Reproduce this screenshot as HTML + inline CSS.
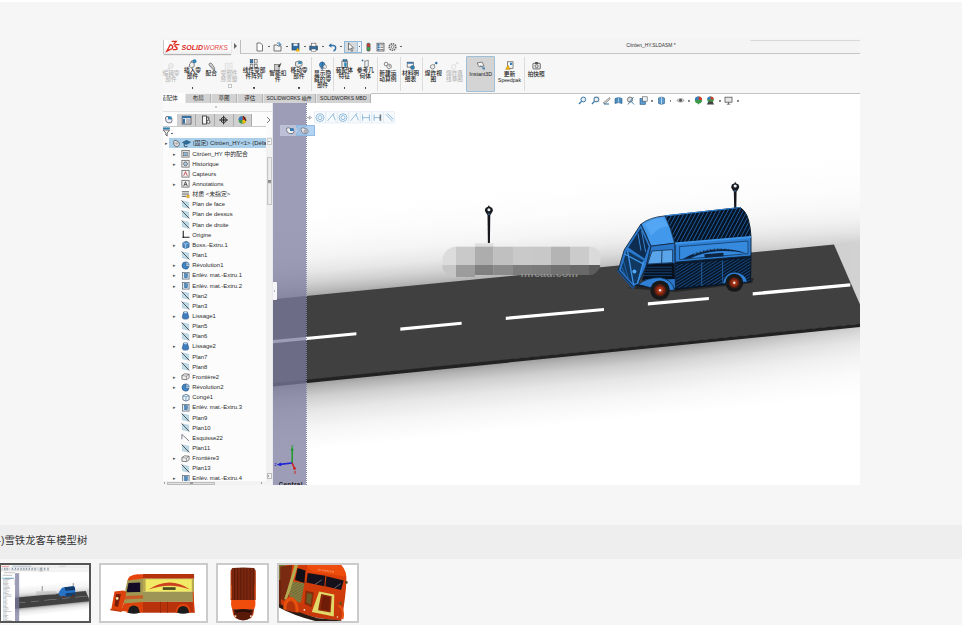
<!DOCTYPE html>
<html lang="zh-CN"><head><meta charset="utf-8"><title>雪铁龙客车模型树</title>
<style>
html,body{margin:0;padding:0}
body{width:962px;height:629px;position:relative;overflow:hidden;background:#f6f6f6;font-family:"Liberation Sans","Noto Sans CJK SC",sans-serif}
div,svg{position:absolute}
.ticon svg,.cico svg{position:static;display:block}
.app{left:163px;top:38px;width:697px;height:447px;background:#f5f5f5;overflow:hidden}
.scene{position:absolute}
.ttext{font-size:5.9px;line-height:10.155px;height:10.155px;color:#2a2a2a;white-space:nowrap;letter-spacing:0px}
.arr{font-size:5px;line-height:10.155px;height:10.155px;color:#555;font-family:"DejaVu Sans",sans-serif}
.ticon{width:9px;height:9px}
.selrow{left:169.4px;width:96.8px;height:10.2px;background:#a9cfea}
.cmd{width:40px;text-align:center;font-size:5.7px;line-height:5.7px;height:5.7px;color:#1a1a1a;white-space:nowrap;font-weight:500}
.cmd.dis{color:#b9b9b9}
.cico{width:11px;height:11px}
.dd{width:1.7px;height:1.4px;background:#444;border-radius:0 0 0.8px 0.8px}
.vsep{top:57px;width:0.7px;height:34px;background:#dcdcdc}
.i3dbox{left:466.4px;top:56.2px;width:28.4px;height:36px;background:#d4d4d4;border:0.8px solid #9ebfd8;box-sizing:border-box;border-radius:1px}
.tab{top:93.6px;height:9.6px;background:#d2d2d2;border-right:0.8px solid #b4b4b4;border-left:0.5px solid #e6e6e6;box-sizing:border-box;font-size:5.5px;line-height:9.8px;text-align:center;color:#222;white-space:nowrap}
.ftab{top:114.4px;height:11.2px;background:#d0d0d0;border-right:0.8px solid #aaa;box-sizing:border-box}
.cap{left:0;top:525px;width:962px;height:33.5px;background:#eeeeee}
.captxt{left:-2.4px;top:533.9px;font-size:10.35px;line-height:13px;color:#333;white-space:nowrap}
.th{top:563px;height:59.8px;box-sizing:border-box;background:#fff;border:2px solid #cbcbcb}
</style></head><body>
<div class="app"></div>

<svg class="scene" viewBox="273 94 587 391" width="587" height="391" style="left:273px;top:94px">
<defs>
<linearGradient id="gUp" gradientUnits="userSpaceOnUse" x1="400" y1="287" x2="391.2" y2="197">
<stop offset="0" stop-color="#a6a6a6"/><stop offset="0.05" stop-color="#b8b8b8"/><stop offset="0.14" stop-color="#d0d0d0"/><stop offset="0.26" stop-color="#e6e6e6"/><stop offset="0.42" stop-color="#f4f4f4"/><stop offset="0.62" stop-color="#fbfbfb"/><stop offset="0.85" stop-color="#fefefe"/><stop offset="1" stop-color="#ffffff"/>
</linearGradient>
<linearGradient id="gFade" gradientUnits="userSpaceOnUse" x1="300" y1="0" x2="860" y2="0">
<stop offset="0" stop-color="#fff" stop-opacity="0"/><stop offset="0.45" stop-color="#fff" stop-opacity="0.18"/><stop offset="1" stop-color="#fff" stop-opacity="0.5"/>
</linearGradient>
<linearGradient id="gDown" gradientUnits="userSpaceOnUse" x1="400" y1="372.5" x2="406.8" y2="440.5">
<stop offset="0" stop-color="#9c9c9c"/><stop offset="0.08" stop-color="#b2b2b2"/><stop offset="0.22" stop-color="#cfcfcf"/><stop offset="0.42" stop-color="#e6e6e6"/><stop offset="0.68" stop-color="#f6f6f6"/><stop offset="1" stop-color="#ffffff"/>
</linearGradient>
<linearGradient id="gFade2" gradientUnits="userSpaceOnUse" x1="640" y1="0" x2="860" y2="0">
<stop offset="0" stop-color="#fff" stop-opacity="0"/><stop offset="1" stop-color="#fff" stop-opacity="0.5"/>
</linearGradient>
<linearGradient id="gBlue" x1="0" y1="0" x2="0" y2="1">
<stop offset="0" stop-color="#4a9ae6"/><stop offset="1" stop-color="#2b74c4"/>
</linearGradient>
<pattern id="ribs" width="2.6" height="2.6" patternUnits="userSpaceOnUse" patternTransform="rotate(-32)">
<rect width="2.6" height="2.6" fill="#07172a"/><rect width="2.6" height="0.6" fill="#1f5ea6"/>
</pattern>
<pattern id="ribsV" width="3.4" height="3.4" patternUnits="userSpaceOnUse" patternTransform="rotate(28)">
<rect width="3.4" height="3.4" fill="#061526"/><rect width="0.8" height="3.4" fill="#2060aa"/>
</pattern>
</defs>
<rect x="273" y="94" width="587" height="391" fill="#ffffff"/>
<!-- upper gradient following the road -->
<polygon points="273,190 860,132 860,306 273,300" fill="url(#gUp)"/>
<polygon points="273,120 860,120 860,306 273,300" fill="url(#gFade)"/>
<!-- lower shadow -->
<polygon points="273,380 860,320 860,412 273,470" fill="url(#gDown)"/>
<polygon points="640,340 860,320 860,412 640,434" fill="url(#gFade2)"/>
<!-- road -->
<polygon points="273,299.2 834,244.5 860,304.6 860,324 273,383.4" fill="#404040"/>
<polygon points="273,383.1 860,323.7 860,327 273,386.4" fill="#222222"/>
<!-- dashes -->
<g fill="#ffffff">
<polygon points="273,340.0 356.4,332.2 356.4,335.2 273,343.2"/>
<polygon points="400.3,327.6 461.6,321.8 461.6,324.8 400.3,330.8"/>
<polygon points="505.8,316.8 604,307.9 604,311 505.8,320"/>
<polygon points="647.9,302.2 708.9,297 708.9,300.1 647.9,305.4"/>
<polygon points="752.7,292.2 850.3,283.2 850.3,286.4 752.7,295.5"/>
</g>
<!-- mosaic watermark -->
<g>
<rect x="475" y="243.4" width="18.6" height="4" fill="#dedede"/>
<path d="M456,246.7 A14,14.6 0 0 0 442.2,261 V265 H456 Z" fill="#dcdcdc"/>
<rect x="456" y="246.7" width="19" height="18.3" fill="#c9c9c9"/>
<rect x="475" y="246.7" width="18.6" height="18.3" fill="#adadad"/>
<rect x="493.6" y="246.7" width="19.4" height="18.3" fill="#c0c0c0"/>
<rect x="513" y="246.7" width="19" height="18.3" fill="#c9c9c9"/>
<rect x="532" y="246.7" width="19" height="18.3" fill="#c8c8c8"/>
<rect x="551" y="246.7" width="19" height="18.3" fill="#b4b4b4"/>
<rect x="570" y="246.7" width="19" height="18.3" fill="#cbcbcb"/>
<path d="M589,246.7 H591 A9.4,11 0 0 1 600.3,257.6 V265 H589 Z" fill="#dadada"/>
<path d="M442.2,265 H456 V277.6 A14,13 0 0 1 442.2,265 Z" fill="#c6c6c6"/>
<rect x="456" y="265" width="19" height="12" fill="#9c9c9c"/>
<rect x="475" y="265" width="18.6" height="10" fill="#808080"/>
<rect x="493.6" y="265" width="19.4" height="10" fill="#8b8b8b"/>
<rect x="513" y="265" width="19" height="10" fill="#7d7d7d"/>
<rect x="532" y="265" width="19" height="10" fill="#7a7a7a"/>
<rect x="551" y="265" width="19" height="10" fill="#717171"/>
<rect x="570" y="265" width="19" height="10" fill="#696969"/>
<path d="M589,265 H600.3 Q600.2,270.6 592.4,275 H589 Z" fill="#5c5c5c"/>
<clipPath id="wmclip"><rect x="510" y="274.2" width="80" height="3"/></clipPath>
<text x="520.6" y="276.5" font-family="Liberation Sans, sans-serif" font-size="10.4" font-weight="bold" fill="#c4c4c4" opacity="0.55" textLength="57.4" lengthAdjust="spacingAndGlyphs" clip-path="url(#wmclip)">mfcad.com</text>
</g>
<!-- lamp 1 -->
<g>
<path d="M487.5,214 H490.3 L489.9,243 H487.9 Z" fill="#15171a"/>
<path d="M488.9,205 l0.7,1.6 l2.6,1.4 l0.8,2.6 l-1.6,3 l-1.2,1.4 h-2.6 l-1.2,-1.4 l-1.6,-3 l0.8,-2.6 l2.6,-1.4 z" fill="#17191d"/>
<circle cx="488.9" cy="209.8" r="1.5" fill="#e9eef2"/>
<path d="M487.4,213.6 h3 l-0.4,1.4 h-2.2 z" fill="#2c5c86"/>
</g>
<!-- lamp 2 -->
<g>
<path d="M733.8,191 H736.6 L736.3,208.4 H734.2 Z" fill="#15171a"/>
<path d="M735.2,181.6 l0.7,1.6 l2.6,1.4 l0.8,2.6 l-1.6,3 l-1.2,1.4 h-2.6 l-1.2,-1.4 l-1.6,-3 l0.8,-2.6 l2.6,-1.4 z" fill="#17191d"/>
<circle cx="735.2" cy="186" r="1.6" fill="#e9eef2"/>
<path d="M733.7,190.2 h3 l-0.4,1.4 h-2.2 z" fill="#2c5c86"/>
</g>

<!-- truck -->
<g stroke-linejoin="round">
<!-- ground shadow -->
<polygon points="626,288 676,292 752,283 754,278 700,281" fill="#1c1c1c" opacity="0.7"/>
<!-- underside -->
<polygon points="633,286 676,290 750.5,282 751,270 676,276" fill="#081424"/>
<!-- cargo side lower (ribbed) -->
<polygon points="675,261.8 751,255.6 750.6,281.6 675.4,288.6" fill="url(#ribs)" stroke="#081626" stroke-width="0.9"/>
<path d="M701.7,259.8 V286 M722.6,258 V284" stroke="#2a72c0" stroke-width="0.7"/>
<polygon points="675,261.8 751,255.6 751,258 675,264.4" fill="#0a1a2c"/>
<!-- cargo side upper panel -->
<polygon points="675,243.4 751,237 751,256 675,262.2" fill="#2e7fd2" stroke="#0a1e36" stroke-width="0.9"/>
<polygon points="679.6,246.6 748,241 748,253.6 679.6,259.6" fill="#368ade" stroke="#0c2440" stroke-width="0.6"/>
<!-- arch logo -->
<path d="M682.5,259.3 Q712,241 746.8,253.4 Q714,246.6 690,258.6 Z" fill="#0c2440"/>
<path d="M694,254.4 Q713,246.2 737,249.8" fill="none" stroke="#3a8ee2" stroke-width="1" stroke-dasharray="2.4 1.2"/>
<rect x="704.5" y="253.4" width="19" height="3.6" fill="#0c2440" transform="rotate(-4.5 714 255)"/>
<!-- roof (ribbed) -->
<path d="M665,215.9 L740.1,207.5 Q746,211 748.5,220 Q750.6,228 751,236.8 L675,242.8 Q671,228 665,215.9 Z" fill="url(#ribsV)" stroke="#081626" stroke-width="0.9"/>
<path d="M665,215.9 L740.1,207.5" stroke="#2f7fd0" stroke-width="1.1" fill="none"/>
<path d="M675,243.4 L751,237" stroke="#3f97ec" stroke-width="2" fill="none"/>
<!-- cab roof -->
<path d="M665.1,215.9 Q650,217 640.9,224.2 Q646,233 650.9,246.2 L674.6,243.2 Q671,228 665.1,215.9 Z" fill="#4298ea" stroke="#0c2440" stroke-width="0.8"/>
<path d="M663,217.6 Q652,218.6 644.6,224 Q648,229 651,236 Q660,226 668.4,226 Z" fill="#56a8f4" opacity="0.85"/>
<!-- cab side -->
<polygon points="650.9,246.2 674.6,243.2 675.4,288.6 664,287 646,270 " fill="#2a76c8" stroke="#0c2440" stroke-width="0.8"/>
<polygon points="652,251 672.6,249.6 672.6,262.6 647.6,264" fill="#5aa4ea" stroke="#0c2440" stroke-width="0.7"/>
<line x1="662" y1="250.4" x2="661.6" y2="263.4" stroke="#0c2440" stroke-width="0.8"/>
<polygon points="646.4,264.6 674.6,263 675,279 642,280.6" fill="#07111e"/>
<path d="M646,267.2 H672 M645,270 H672 M644,272.8 H672 M643,275.6 H672" stroke="#1f5ea6" stroke-width="0.6"/>
<!-- front face / windshield -->
<polygon points="640.9,224.2 650.9,246.2 645.9,266.8 638.4,283.5 633.4,286.8 618.3,270.1 624.2,250" fill="#2a78cc" stroke="#0c2440" stroke-width="0.9"/>
<polygon points="640.6,228.4 648.6,246.4 644.6,258.6 628.4,247.6" fill="#0e2c50"/>
<path d="M641.6,231 L645.6,252 M638,233.6 L641,250.6" stroke="#3a8ee2" stroke-width="0.9"/>
<polygon points="626.8,250.6 644,260.6 637,283 632.6,283.6 620.8,270" fill="#103860"/>
<path d="M627.6,251 L633.4,284 M643.6,261 L637.4,283.6 M624.6,254 L644.6,264.6" stroke="#3f93e6" stroke-width="1.3" fill="none"/>
<path d="M622.6,258 L628.6,279.6 M620.6,264.6 L625.6,276" stroke="#2a72c0" stroke-width="0.7" fill="none"/>
<circle cx="634.4" cy="271.4" r="2" fill="#56aaf6"/>
<path d="M617.4,270.6 L632.8,288.2 L634.4,286.6" stroke="#1a4f8f" stroke-width="1.4" fill="none"/>
<!-- fenders -->
<path d="M638.4,284.6 Q646,277.4 660.5,277.6 Q672,279.6 674.6,290 L664,291 Z" fill="#2f80d4" stroke="#0c2440" stroke-width="0.8"/>
<path d="M722.4,283.6 Q725.4,271.6 735,272 Q745,273 747.6,282 Z" fill="#2f80d4" stroke="#0c2440" stroke-width="0.8"/>
<!-- front wheel -->
<circle cx="660.1" cy="290.2" r="9.8" fill="#17181a"/>
<circle cx="660.1" cy="290.2" r="6.4" fill="#3a1c16"/>
<circle cx="660.1" cy="290.2" r="5.2" fill="#742210"/>
<circle cx="660.1" cy="290.2" r="3.4" fill="#a23418"/>
<circle cx="660.1" cy="290.2" r="1.3" fill="#f6ece8"/>
<!-- rear wheel -->
<circle cx="734.3" cy="282.8" r="9" fill="#17181a"/>
<circle cx="734.3" cy="282.8" r="5.8" fill="#3a1c16"/>
<circle cx="734.3" cy="282.8" r="4.7" fill="#742210"/>
<circle cx="734.3" cy="282.8" r="3.1" fill="#a23418"/>
<circle cx="734.3" cy="282.8" r="1.2" fill="#f6ece8"/>
</g>
</svg>
<!-- purple strip overlay -->
<div style="left:272.9px;top:103.2px;width:33.2px;height:381.8px;background:rgba(123,123,158,0.745)"></div>
<div style="left:305.6px;top:103.2px;width:0;height:381.8px;border-left:0.9px dotted #8585a6"></div>
<!-- title bar -->
<div style="left:163px;top:38px;width:697px;height:15.4px;background:#f4f4f4"></div>
<div style="left:240.2px;top:52.9px;width:619.8px;height:0.9px;background:#c6c6c6"></div>
<div style="left:750px;top:40.1px;width:110px;height:0.8px;background:#d9d9d9"></div>
<div style="left:163px;top:53.9px;width:697px;height:39.4px;background:#f7f7f7"></div>
<div style="left:371px;top:93.1px;width:489px;height:0.9px;background:#c3c3c3"></div>
<!-- logo -->
<div style="left:164px;top:39.8px;width:67px;height:14.4px;background:linear-gradient(180deg,#ffffff 0%,#ffffff 60%,#ececec 100%);box-shadow:0 1px 1px rgba(0,0,0,.28), -0.6px 0 0 rgba(0,0,0,.25)"></div>
<svg viewBox="0 0 67 14.4" width="67" height="14.4" style="left:164px;top:39.8px">
<g fill="none" stroke="#de2b22" stroke-width="1.35">
<path d="M7.6,1.4 H12.2 L9.4,4.6"/><path d="M6.2,4.8 L2.8,11.2 L7.8,8.8 Q9.8,7 7.6,5.2 Z"/><path d="M15.4,4.6 H12.2 Q10.2,4.8 11.2,6.6 L12.8,7.6 Q13.8,9.4 11.4,9.6 H8.8"/>
</g>
<text x="17.6" y="10.2" font-family="Liberation Sans, sans-serif" font-size="7.3" font-weight="bold" font-style="italic" fill="#de2b22" textLength="21.6" lengthAdjust="spacingAndGlyphs">SOLID</text>
<text x="39.6" y="10.2" font-family="Liberation Sans, sans-serif" font-size="7.3" font-style="italic" fill="#e0443c" textLength="24.2" lengthAdjust="spacingAndGlyphs">WORKS</text>
</svg>
<div style="left:234px;top:43.2px;width:0;height:0;border-top:3px solid transparent;border-bottom:3px solid transparent;border-left:3.8px solid #666"></div>
<div style="left:240.2px;top:40px;width:0.8px;height:13.4px;background:#bdbdbd"></div>
<div style="position:absolute;left:255.1px;top:41.5px;width:9px;height:10px"><svg viewBox="0 0 9 10" width="9" height="10"><path d="M2,1 H5.5 L7.5,3 V9 H2 Z" fill="#fff" stroke="#555" stroke-width="0.8"/></svg></div>
<div class="dd" style="left:268.2px;top:46px"></div>
<div style="position:absolute;left:273.1px;top:41.5px;width:9px;height:10px"><svg viewBox="0 0 9 10" width="9" height="10"><path d="M1,3 H4 L5,4 H8 V9 H1 Z" fill="#f4f4f4" stroke="#555" stroke-width="0.8"/><path d="M4,1 H7 V3.5 M7,3.5 L5.6,2.4 M7,3.5 L8.2,2.2" stroke="#2e6fa8" stroke-width="0.9" fill="none"/></svg></div>
<div class="dd" style="left:286.2px;top:46px"></div>
<div style="position:absolute;left:291.3px;top:41.5px;width:9px;height:10px"><svg viewBox="0 0 9 10" width="9" height="10"><rect x="1" y="1.5" width="7" height="6.5" fill="#2e6fa8" stroke="#234" stroke-width="0.6"/><rect x="2.5" y="1.5" width="4" height="2.4" fill="#eee"/><path d="M4.5,9.5 L6.7,5.8 L8.8,9.5 Z" fill="#f2b400"/></svg></div>
<div class="dd" style="left:303.9px;top:46px"></div>
<div style="position:absolute;left:309.2px;top:41.5px;width:9px;height:10px"><svg viewBox="0 0 9 10" width="9" height="10"><rect x="0.8" y="4" width="7.6" height="4" fill="#2e6fa8" stroke="#234" stroke-width="0.6"/><rect x="2.3" y="1.2" width="4.6" height="3" fill="#fff" stroke="#555" stroke-width="0.6"/><rect x="2.3" y="7" width="4.6" height="2.2" fill="#fff" stroke="#555" stroke-width="0.5"/></svg></div>
<div class="dd" style="left:322.2px;top:46px"></div>
<div style="position:absolute;left:327.7px;top:41.5px;width:9px;height:10px"><svg viewBox="0 0 9 10" width="9" height="10"><path d="M1.5,3.5 H5.5 Q8,3.8 7.6,6.5 Q7.2,8.5 5.5,9" fill="none" stroke="#2e6fa8" stroke-width="1.5"/><path d="M0.6,3.5 L3.4,1.2 V5.8 Z" fill="#2e6fa8"/></svg></div>
<div class="dd" style="left:340.2px;top:46px"></div>
<div style="position:absolute;left:344.4px;top:40.6px;width:17.4px;height:12px;border:0.8px solid #8fb8d8;background:linear-gradient(90deg,#d6dade 0,#d6dade 12.2px,#f3f4f6 12.2px);box-sizing:border-box"></div>
<div style="position:absolute;left:356.6px;top:40.6px;width:0.8px;height:12px;background:#9ec4e0"></div>
<div style="position:absolute;left:346.1px;top:41.5px;width:9px;height:10px"><svg viewBox="0 0 9 10" width="9" height="10"><path d="M2.5,1 V8 L4.2,6.5 L5.6,9.3 L6.6,8.8 L5.3,6.1 L7.6,6 Z" fill="#fff" stroke="#444" stroke-width="0.7"/></svg></div>
<div class="dd" style="left:358.5px;top:46px"></div>
<div style="position:absolute;left:363.5px;top:41.5px;width:9px;height:10px"><svg viewBox="0 0 9 10" width="9" height="10"><rect x="2.5" y="0.8" width="4" height="8.6" rx="1.6" fill="#666"/><circle cx="4.5" cy="3.2" r="1.3" fill="#e03020"/><circle cx="4.5" cy="6.8" r="1.3" fill="#30b040"/></svg></div>
<div style="position:absolute;left:375.7px;top:41.5px;width:9px;height:10px"><svg viewBox="0 0 9 10" width="9" height="10"><rect x="1" y="1.2" width="7" height="7.8" fill="#f4f4f4" stroke="#444" stroke-width="0.7"/><rect x="1.6" y="2" width="2" height="1.8" fill="#2e6fa8"/><rect x="1.6" y="4.4" width="2" height="1.8" fill="#2e6fa8"/><rect x="1.6" y="6.8" width="2" height="1.6" fill="#2e6fa8"/><path d="M4.4,2.9 H7.4 M4.4,5.3 H7.4 M4.4,7.6 H7.4" stroke="#444" stroke-width="0.7"/></svg></div>
<div style="position:absolute;left:387.7px;top:41.5px;width:9px;height:10px"><svg viewBox="0 0 9 10" width="9" height="10"><circle cx="4.5" cy="5" r="3.3" fill="#f2f2f2" stroke="#666" stroke-width="1.5" stroke-dasharray="1.5 0.7"/><circle cx="4.5" cy="5" r="1.4" fill="#fff" stroke="#666" stroke-width="0.8"/></svg></div>
<div class="dd" style="left:400.4px;top:46px"></div>
<div style="left:600px;top:43px;width:102px;text-align:center;font-size:4.9px;line-height:6px;color:#333;white-space:nowrap">Citröen_HY.SLDASM *</div>
<!-- command manager -->
<div class="cico" style="left:166.4px;top:61.5px"><svg viewBox="0 0 12 12" width="9.2" height="9.2" style="opacity:0.35"><circle cx="6.5" cy="5" r="3.2" fill="#ddd" stroke="#999" stroke-width="0.8"/><path d="M2,10 L5,7" stroke="#999" stroke-width="1.4"/></svg></div>
<div class="cmd dis" style="left:151.0px;top:70.95px">编辑零</div>
<div class="cmd dis" style="left:151.0px;top:76.95px">部件</div>
<div class="cico" style="left:187.9px;top:58.8px"><svg viewBox="0 0 12 12" width="9.2" height="9.2" style="opacity:1"><path d="M2,6.5 L5,4 L8,5.5 V10 L5,11.5 L2,10 Z" fill="#f0f0f0" stroke="#444" stroke-width="0.8"/><circle cx="8.5" cy="3" r="2.6" fill="#2e86b8"/><path d="M3,4.5 L6,1.5" stroke="#333" stroke-width="1"/></svg></div>
<div class="cmd" style="left:172.5px;top:67.85px">插入零</div>
<div class="cmd" style="left:172.5px;top:73.85px">部件</div>
<div class="dd" style="left:191.7px;top:87.2px"></div>
<div class="cico" style="left:206.6px;top:61.6px"><svg viewBox="0 0 12 12" width="9.2" height="9.2" style="opacity:1"><path d="M3,2 Q5,0.5 6.5,2.5 L10,8 Q10.5,10.5 8.5,10.5 L3.5,5 Q2,3.5 3,2 Z" fill="#ddd" stroke="#555" stroke-width="0.9"/><path d="M4,3.5 L9,9.5" stroke="#888" stroke-width="0.8"/></svg></div>
<div class="cmd" style="left:191.2px;top:71.15px">配合</div>
<div class="cico" style="left:224.4px;top:61.6px"><svg viewBox="0 0 12 12" width="9.2" height="9.2" style="opacity:0.35"><rect x="1.5" y="1.5" width="9" height="9" fill="#eee" stroke="#999" stroke-width="0.8"/><circle cx="6" cy="6" r="2.2" fill="none" stroke="#999" stroke-width="0.8"/></svg></div>
<div class="cmd dis" style="left:209.0px;top:70.95px">零部件</div>
<div class="cmd dis" style="left:209.0px;top:76.95px">预览窗</div>
<div class="cico" style="left:249.4px;top:58.8px"><svg viewBox="0 0 12 12" width="9.2" height="9.2" style="opacity:1"><rect x="1.5" y="0.8" width="3.6" height="4.4" fill="#3a84c0" stroke="#234" stroke-width="0.6"/><rect x="7" y="0.8" width="3.6" height="4.4" fill="#eee" stroke="#444" stroke-width="0.7"/><rect x="1.5" y="6.8" width="3.6" height="4.4" fill="#eee" stroke="#444" stroke-width="0.7"/><rect x="7" y="6.8" width="3.6" height="4.4" fill="#eee" stroke="#444" stroke-width="0.7"/></svg></div>
<div class="cmd" style="left:234.0px;top:67.85px">线性零部</div>
<div class="cmd" style="left:234.0px;top:73.85px">件阵列</div>
<div class="dd" style="left:253.2px;top:87.2px"></div>
<div class="cico" style="left:273.2px;top:62.199999999999996px"><svg viewBox="0 0 12 12" width="9.2" height="9.2" style="opacity:1"><rect x="2" y="3" width="6" height="8.5" fill="#ccc" stroke="#555" stroke-width="0.8"/><path d="M6,6 L11,0.8 L9,6.5 Z" fill="#333"/></svg></div>
<div class="cmd" style="left:257.8px;top:70.50px">智能扣</div>
<div class="cmd" style="left:257.8px;top:76.50px">件</div>
<div class="cico" style="left:294.4px;top:58.8px"><svg viewBox="0 0 12 12" width="9.2" height="9.2" style="opacity:1"><path d="M2,4 L7,2.5 L10.5,3.5 V8.5 L6,10.5 L2,9 Z" fill="#e6e6e6" stroke="#444" stroke-width="0.8"/><rect x="5.5" y="3" width="4.5" height="3.4" fill="#2e86b8"/></svg></div>
<div class="cmd" style="left:279.0px;top:67.85px">移动零</div>
<div class="cmd" style="left:279.0px;top:73.85px">部件</div>
<div class="dd" style="left:298.2px;top:87.2px"></div>
<div class="cico" style="left:318.0px;top:61.4px"><svg viewBox="0 0 12 12" width="9.2" height="9.2" style="opacity:1"><circle cx="5.5" cy="5" r="3.6" fill="#3f8ec8" stroke="#1f4b7a" stroke-width="0.7"/><path d="M5.5,0.8 V11 M3,8.5 L5.5,11 L8,8.5" stroke="#1f4b7a" stroke-width="1" fill="none"/><circle cx="9" cy="7.5" r="2.4" fill="#e8e8e8" stroke="#666" stroke-width="0.6"/></svg></div>
<div class="cmd" style="left:302.6px;top:70.85px">显示隐</div>
<div class="cmd" style="left:302.6px;top:76.75px">藏的零</div>
<div class="cmd" style="left:302.6px;top:82.65px">部件</div>
<div class="cico" style="left:339.7px;top:58.8px"><svg viewBox="0 0 12 12" width="9.2" height="9.2" style="opacity:1"><rect x="2.5" y="2.5" width="7.5" height="9" fill="#e8e8e8" stroke="#444" stroke-width="0.8"/><rect x="4" y="0.8" width="5" height="2.4" fill="#2e86b8" stroke="#234" stroke-width="0.5"/><rect x="5.5" y="4.5" width="3.2" height="5.5" fill="#2e86b8"/></svg></div>
<div class="cmd" style="left:324.3px;top:67.85px">装配体</div>
<div class="cmd" style="left:324.3px;top:73.85px">特征</div>
<div class="dd" style="left:343.5px;top:87.2px"></div>
<div class="cico" style="left:360.7px;top:58.8px"><svg viewBox="0 0 12 12" width="9.2" height="9.2" style="opacity:1"><path d="M5,2 V11 M5,3 L9.5,1.5 V9.5 L5,11" fill="#eef4f8" stroke="#555" stroke-width="0.8"/><circle cx="2" cy="1.8" r="1.1" fill="#2e6fa8"/></svg></div>
<div class="cmd" style="left:345.3px;top:67.85px">参考几</div>
<div class="cmd" style="left:345.3px;top:73.85px">何体</div>
<div class="dd" style="left:364.5px;top:87.2px"></div>
<div class="cico" style="left:383.2px;top:61.4px"><svg viewBox="0 0 12 12" width="9.2" height="9.2" style="opacity:1"><circle cx="4" cy="4" r="2.4" fill="none" stroke="#666" stroke-width="1"/><circle cx="8" cy="7" r="3" fill="#eee" stroke="#666" stroke-width="0.9"/><path d="M8,5 V7 H9.6" stroke="#444" stroke-width="0.7" fill="none"/></svg></div>
<div class="cmd" style="left:367.8px;top:71.00px">新建运</div>
<div class="cmd" style="left:367.8px;top:77.00px">动算例</div>
<div class="cico" style="left:405.9px;top:61.4px"><svg viewBox="0 0 12 12" width="9.2" height="9.2" style="opacity:1"><rect x="1.5" y="1.5" width="8" height="6.5" fill="#f4f4f4" stroke="#444" stroke-width="0.8"/><rect x="1.5" y="1.5" width="8" height="2" fill="#2e6fa8"/><circle cx="8.5" cy="8.5" r="2.6" fill="#2e86b8" stroke="#234" stroke-width="0.5"/></svg></div>
<div class="cmd" style="left:390.5px;top:71.00px">材料明</div>
<div class="cmd" style="left:390.5px;top:77.00px">细表</div>
<div class="cico" style="left:428.7px;top:61.4px"><svg viewBox="0 0 12 12" width="9.2" height="9.2" style="opacity:1"><path d="M2,6 L5,4.5 L7.5,6 V9 L4.5,10.5 L2,9 Z" fill="#eee" stroke="#555" stroke-width="0.8"/><circle cx="9.5" cy="2.5" r="1.6" fill="#2e6fa8"/><path d="M6.5,5 L8.6,3.2" stroke="#555" stroke-width="0.8"/></svg></div>
<div class="cmd" style="left:413.3px;top:71.00px">爆炸视</div>
<div class="cmd" style="left:413.3px;top:77.00px">图</div>
<div class="cico" style="left:449.9px;top:61.4px"><svg viewBox="0 0 12 12" width="9.2" height="9.2" style="opacity:0.35"><path d="M2,6 L5,4.5 L7.5,6 V9 L4.5,10.5 L2,9 Z" fill="#f2f2f2" stroke="#999" stroke-width="0.8"/><circle cx="9.5" cy="2.5" r="1.6" fill="#bbb"/><path d="M6.5,5 L8.6,3.2" stroke="#aaa" stroke-width="0.8"/></svg></div>
<div class="cmd dis" style="left:434.5px;top:71.00px">爆炸直</div>
<div class="cmd dis" style="left:434.5px;top:77.00px">线草图</div>
<div class="i3dbox"></div>
<div class="cico" style="left:476.1px;top:61.4px"><svg viewBox="0 0 12 12" width="9.2" height="9.2" style="opacity:1"><path d="M1.5,2.5 L8,1.5 L10.5,6.5 L4,7.5 Z" fill="#f6f6f6" stroke="#444" stroke-width="0.8"/><path d="M6,6 L11,10.5 M11,10.5 L8.3,10.2 M11,10.5 L10.6,8" stroke="#2e6fa8" stroke-width="1.1" fill="none"/></svg></div>
<div class="cmd" style="left:460.7px;top:71.50px;font-size:5.3px;font-weight:400">Instant3D</div>
<div class="cico" style="left:504.9px;top:61.4px"><svg viewBox="0 0 12 12" width="9.2" height="9.2" style="opacity:1"><rect x="3.5" y="1" width="7" height="8.5" fill="#f4f4f4" stroke="#444" stroke-width="0.8"/><rect x="6.5" y="2.2" width="3" height="3" fill="#2e86b8"/><path d="M0.8,11 L3.8,5.2 L6.8,11 Z" fill="#f2b400" stroke="#8a6400" stroke-width="0.4"/></svg></div>
<div class="cmd" style="left:489.5px;top:71.50px">更新</div>
<div class="cmd" style="left:489.5px;top:77.65px;font-size:5.1px;font-weight:400">Speedpak</div>
<div class="cico" style="left:531.6px;top:61.4px"><svg viewBox="0 0 12 12" width="9.2" height="9.2" style="opacity:1"><rect x="1.2" y="3" width="9.6" height="7.4" rx="0.8" fill="#f0f0f0" stroke="#333" stroke-width="0.9"/><rect x="4" y="1.6" width="4" height="1.8" fill="#333"/><circle cx="6" cy="6.7" r="2.1" fill="#ddd" stroke="#333" stroke-width="0.8"/></svg></div>
<div class="cmd" style="left:516.2px;top:71.50px">拍快照</div>
<div style="left:227.8px;top:83.7px;width:3.8px;height:4.4px;border:0.6px solid #c4c4c4;background:#fdfdfd;box-sizing:border-box"></div>
<div class="vsep" style="left:310.7px"></div>
<div class="vsep" style="left:333.0px"></div>
<div class="vsep" style="left:376.7px"></div>
<div class="vsep" style="left:399.5px"></div>
<div class="vsep" style="left:422.4px"></div>
<div class="vsep" style="left:524.2px"></div>
<!-- tabs -->
<div style="left:163px;top:93.4px;width:22.4px;height:10px;background:#fdfdfd;font-size:5.8px;line-height:10px;color:#333;white-space:nowrap;overflow:hidden"><span style="position:relative;left:-2.6px">装配体</span></div>
<div class="tab" style="left:185.4px;width:25.8px">布局</div>
<div class="tab" style="left:211.2px;width:25.6px">草图</div>
<div class="tab" style="left:236.8px;width:25.8px">评估</div>
<div class="tab" style="left:262.6px;width:53.2px;font-size:5px">SOLIDWORKS 插件</div>
<div class="tab" style="left:315.8px;width:55px;font-size:5px">SOLIDWORKS MBD</div>
<!-- tree panel -->
<div style="left:163px;top:103.2px;width:110.3px;height:381.8px;background:#fcfcfc"></div>
<div style="left:163px;top:103.2px;width:110.3px;height:8.6px;background:#f9f9f9;border-bottom:0.7px solid #e2e2e2;box-sizing:border-box"></div>
<div style="left:214.6px;top:106px;width:2px;height:2px;border:0.5px solid #aaa;border-radius:50%;box-sizing:border-box"></div>
<div style="left:163px;top:114.4px;width:14.4px;height:11.2px;background:#fff"></div>
<div class="ftab" style="left:177.4px;width:18.8px"></div>
<div class="ftab" style="left:196.2px;width:18.6px"></div>
<div class="ftab" style="left:214.8px;width:18.9px"></div>
<div class="ftab" style="left:233.7px;width:18.5px"></div>
<div style="left:163px;top:125.6px;width:103px;height:0.7px;background:#c9c9c9"></div>
<!-- feature tabs icons -->
<svg viewBox="0 0 90 12" width="90" height="12" style="left:163px;top:114px">
<path d="M2.5,4 Q2.5,2 5,2.4 L8.6,4 Q9.8,6.4 8.2,8.6 Q4.8,9.6 3,7.4 Z" fill="#eef0f2" stroke="#556" stroke-width="0.8"/><rect x="5" y="2.4" width="3.6" height="3" fill="#2e86b8"/>
<rect x="19.2" y="2.2" width="8.8" height="7.8" fill="#f4f4f4" stroke="#445" stroke-width="0.8"/><rect x="19.2" y="2.2" width="8.8" height="2" fill="#2e6fa8"/><rect x="20" y="5" width="2" height="4.4" fill="#2e6fa8"/><path d="M23,6 H27.4 M23,8 H27.4" stroke="#445" stroke-width="0.7"/>
<rect x="39.4" y="2" width="4" height="8" fill="#f4f4f4" stroke="#333" stroke-width="0.8"/><path d="M43.4,3.2 H45.8 V6" stroke="#333" stroke-width="0.8" fill="none"/><circle cx="45.4" cy="7.8" r="1.6" fill="#f4f4f4" stroke="#333" stroke-width="0.8"/>
<circle cx="60.6" cy="6" r="2.6" fill="none" stroke="#222" stroke-width="0.9"/><path d="M60.6,1.6 V10.4 M56.2,6 H65" stroke="#222" stroke-width="0.9"/><circle cx="60.6" cy="6" r="0.9" fill="#222"/>
<circle cx="79.4" cy="6" r="3.8" fill="#3a9a48"/><path d="M79.4,6 L79.4,2.2 A3.8,3.8 0 0 1 83.2,6 Z" fill="#d83a2a"/><path d="M79.4,6 L75.6,6 A3.8,3.8 0 0 1 79.4,2.2 Z" fill="#3a78c8"/><path d="M79.4,6 L83.2,6 A3.8,3.8 0 0 1 79.4,9.8 Z" fill="#f0b818"/><path d="M80.4,2.4 L83,7" stroke="#222" stroke-width="1"/>
</svg>
<svg viewBox="0 0 5 8" width="5" height="8" style="left:266px;top:116px"><path d="M1,1 L4,4 L1,7" fill="none" stroke="#666" stroke-width="0.9"/></svg>
<!-- filter -->
<svg viewBox="0 0 12 10" width="12" height="10" style="left:163px;top:127.4px"><rect x="0" y="0.4" width="6.8" height="2" fill="#2e86b8"/><path d="M0.2,3 H6.6 L4.2,6 V9 L2.8,8 V6 Z" fill="#f0f0f0" stroke="#444" stroke-width="0.7"/></svg>
<div class="dd" style="left:171px;top:133px"></div>
<div style="left:174.4px;top:126.8px;width:91.6px;height:9.2px;background:#fff"></div>
<div class="selrow" style="top:138.0px"></div>
<div class="arr" style="left:165px;top:138.37px">▸</div>
<div class="ticon" style="left:171.5px;top:138.95px"><svg viewBox="0 0 10 10" width="9" height="9"><path d="M2,3 Q2,1 4.5,1.5 L8,4 Q9,6.5 6.5,8.5 Q3,9 2,6 Z" fill="#e8e8ea" stroke="#555" stroke-width="0.9"/><circle cx="5" cy="5" r="1.4" fill="#aaa"/></svg></div>
<div class="ticon" style="left:181.5px;top:138.95px"><svg viewBox="0 0 10 10" width="9" height="9"><path d="M0.5,4 L5,1.5 L9.5,3.5 L5,6 Z" fill="#2d6f9e" stroke="#1b4560" stroke-width="0.6"/><path d="M2.5,5.3 V8 M2.5,8 Q4,9.4 6,8" stroke="#1b4560" stroke-width="1" fill="none"/></svg></div>
<div class="ttext" style="left:192.6px;top:138.37px;width:73px;overflow:hidden">(固定) Citröen_HY<1> (Défa</div>
<div class="arr" style="left:173px;top:148.53px">▸</div>
<div class="ticon" style="left:180.8px;top:149.00px"><svg viewBox="0 0 10 10" width="9" height="9"><rect x="1" y="1.5" width="8" height="7.5" fill="#f4f4f4" stroke="#666" stroke-width="0.9"/><rect x="3" y="3.5" width="4" height="4" fill="#8fb8d8" stroke="#555" stroke-width="0.6"/></svg></div>
<div class="ttext" style="left:192.3px;top:148.53px">Citröen_HY 中的配合</div>
<div class="arr" style="left:173px;top:158.68px">▸</div>
<div class="ticon" style="left:180.8px;top:159.16px"><svg viewBox="0 0 10 10" width="9" height="9"><rect x="1" y="1.5" width="8" height="7.5" fill="#f4f4f4" stroke="#666" stroke-width="0.9"/><circle cx="5" cy="5.3" r="2.2" fill="#a9c6e0" stroke="#444" stroke-width="0.7"/></svg></div>
<div class="ttext" style="left:192.3px;top:158.68px">Historique</div>
<div class="ticon" style="left:180.8px;top:169.31px"><svg viewBox="0 0 10 10" width="9" height="9"><rect x="1" y="1.5" width="8" height="7.5" fill="#f4f4f4" stroke="#666" stroke-width="0.9"/><path d="M3,7.5 L5,3 L7,7.5" fill="none" stroke="#b33" stroke-width="0.9"/></svg></div>
<div class="ttext" style="left:192.3px;top:168.84px">Capteurs</div>
<div class="arr" style="left:173px;top:178.99px">▸</div>
<div class="ticon" style="left:180.8px;top:179.47px"><svg viewBox="0 0 10 10" width="9" height="9"><rect x="1" y="1.5" width="8" height="7.5" fill="#f4f4f4" stroke="#666" stroke-width="0.9"/><path d="M3,8 L5,3 L7,8 M3.8,6.3 H6.2" fill="none" stroke="#333" stroke-width="0.9"/></svg></div>
<div class="ttext" style="left:192.3px;top:178.99px">Annotations</div>
<div class="ticon" style="left:180.8px;top:189.62px"><svg viewBox="0 0 10 10" width="9" height="9"><path d="M1,2 H9 M1,4.5 H9 M1,7 H6" stroke="#555" stroke-width="1.1"/><rect x="6" y="5.5" width="3.5" height="3.5" fill="#e0b040"/></svg></div>
<div class="ttext" style="left:192.3px;top:189.15px">材质 <未指定></div>
<div class="ticon" style="left:180.8px;top:199.78px"><svg viewBox="0 0 10 10" width="9" height="9"><polygon points="1.5,1 8.5,2.5 8.5,9 1.5,7.5" fill="#bfdcea" stroke="#8fb5c8" stroke-width="0.5"/><line x1="0.8" y1="0.6" x2="9.2" y2="9.4" stroke="#444" stroke-width="1"/></svg></div>
<div class="ttext" style="left:192.3px;top:199.30px">Plan de face</div>
<div class="ticon" style="left:180.8px;top:209.93px"><svg viewBox="0 0 10 10" width="9" height="9"><polygon points="1.5,1 8.5,2.5 8.5,9 1.5,7.5" fill="#bfdcea" stroke="#8fb5c8" stroke-width="0.5"/><line x1="0.8" y1="0.6" x2="9.2" y2="9.4" stroke="#444" stroke-width="1"/></svg></div>
<div class="ttext" style="left:192.3px;top:209.46px">Plan de dessus</div>
<div class="ticon" style="left:180.8px;top:220.09px"><svg viewBox="0 0 10 10" width="9" height="9"><polygon points="1.5,1 8.5,2.5 8.5,9 1.5,7.5" fill="#bfdcea" stroke="#8fb5c8" stroke-width="0.5"/><line x1="0.8" y1="0.6" x2="9.2" y2="9.4" stroke="#444" stroke-width="1"/></svg></div>
<div class="ttext" style="left:192.3px;top:219.61px">Plan de droite</div>
<div class="ticon" style="left:180.8px;top:230.24px"><svg viewBox="0 0 10 10" width="9" height="9"><path d="M2.5,0.8 V8 H9.5" fill="none" stroke="#222" stroke-width="1.2"/><circle cx="2.5" cy="8" r="0.9" fill="#222"/></svg></div>
<div class="ttext" style="left:192.3px;top:229.77px">Origine</div>
<div class="arr" style="left:173px;top:239.92px">▸</div>
<div class="ticon" style="left:180.8px;top:240.40px"><svg viewBox="0 0 10 10" width="9" height="9"><path d="M2,3 L6,1.5 L9,3 V8 L5,9.5 L2,8 Z" fill="#4e8ec8" stroke="#26527e" stroke-width="0.7"/><path d="M2,3 L5,4.5 L9,3 M5,4.5 V9.5" stroke="#dbe9f5" stroke-width="0.6" fill="none"/></svg></div>
<div class="ttext" style="left:192.3px;top:239.92px">Boss.-Extru.1</div>
<div class="ticon" style="left:180.8px;top:250.55px"><svg viewBox="0 0 10 10" width="9" height="9"><polygon points="1.5,1 8.5,2.5 8.5,9 1.5,7.5" fill="#bfdcea" stroke="#8fb5c8" stroke-width="0.5"/><line x1="0.8" y1="0.6" x2="9.2" y2="9.4" stroke="#444" stroke-width="1"/></svg></div>
<div class="ttext" style="left:192.3px;top:250.08px">Plan1</div>
<div class="arr" style="left:173px;top:260.23px">▸</div>
<div class="ticon" style="left:180.8px;top:260.71px"><svg viewBox="0 0 10 10" width="9" height="9"><path d="M5,1 A4,4 0 1 0 9,6 L5,5.5 Z" fill="#3f86c8" stroke="#23507e" stroke-width="0.7"/><path d="M5.8,0.8 A4,4 0 0 1 9.3,4.6 L5.8,4.3 Z" fill="#9cc4e6" stroke="#23507e" stroke-width="0.5"/></svg></div>
<div class="ttext" style="left:192.3px;top:260.23px">Révolution1</div>
<div class="arr" style="left:173px;top:270.39px">▸</div>
<div class="ticon" style="left:180.8px;top:270.86px"><svg viewBox="0 0 10 10" width="9" height="9"><rect x="1.5" y="1.5" width="7.5" height="7.5" fill="#dce6ee" stroke="#5a6a78" stroke-width="0.8"/><rect x="4" y="3" width="3" height="4.5" fill="#4e8ec8" stroke="#26527e" stroke-width="0.5"/></svg></div>
<div class="ttext" style="left:192.3px;top:270.39px">Enlèv. mat.-Extru.1</div>
<div class="arr" style="left:173px;top:280.54px">▸</div>
<div class="ticon" style="left:180.8px;top:281.02px"><svg viewBox="0 0 10 10" width="9" height="9"><rect x="1.5" y="1.5" width="7.5" height="7.5" fill="#dce6ee" stroke="#5a6a78" stroke-width="0.8"/><rect x="4" y="3" width="3" height="4.5" fill="#4e8ec8" stroke="#26527e" stroke-width="0.5"/></svg></div>
<div class="ttext" style="left:192.3px;top:280.54px">Enlèv. mat.-Extru.2</div>
<div class="ticon" style="left:180.8px;top:291.17px"><svg viewBox="0 0 10 10" width="9" height="9"><polygon points="1.5,1 8.5,2.5 8.5,9 1.5,7.5" fill="#bfdcea" stroke="#8fb5c8" stroke-width="0.5"/><line x1="0.8" y1="0.6" x2="9.2" y2="9.4" stroke="#444" stroke-width="1"/></svg></div>
<div class="ttext" style="left:192.3px;top:290.70px">Plan2</div>
<div class="ticon" style="left:180.8px;top:301.33px"><svg viewBox="0 0 10 10" width="9" height="9"><polygon points="1.5,1 8.5,2.5 8.5,9 1.5,7.5" fill="#bfdcea" stroke="#8fb5c8" stroke-width="0.5"/><line x1="0.8" y1="0.6" x2="9.2" y2="9.4" stroke="#444" stroke-width="1"/></svg></div>
<div class="ttext" style="left:192.3px;top:300.85px">Plan3</div>
<div class="arr" style="left:173px;top:311.01px">▸</div>
<div class="ticon" style="left:180.8px;top:311.48px"><svg viewBox="0 0 10 10" width="9" height="9"><path d="M3,1 H7 L8.5,6.5 Q9,9 5,9 Q1,9 1.5,6.5 Z" fill="#3f7fc0" stroke="#1f4b7a" stroke-width="0.7"/><ellipse cx="5" cy="1.8" rx="2" ry="0.9" fill="#b8d4ec"/></svg></div>
<div class="ttext" style="left:192.3px;top:311.01px">Lissage1</div>
<div class="ticon" style="left:180.8px;top:321.64px"><svg viewBox="0 0 10 10" width="9" height="9"><polygon points="1.5,1 8.5,2.5 8.5,9 1.5,7.5" fill="#bfdcea" stroke="#8fb5c8" stroke-width="0.5"/><line x1="0.8" y1="0.6" x2="9.2" y2="9.4" stroke="#444" stroke-width="1"/></svg></div>
<div class="ttext" style="left:192.3px;top:321.16px">Plan5</div>
<div class="ticon" style="left:180.8px;top:331.79px"><svg viewBox="0 0 10 10" width="9" height="9"><polygon points="1.5,1 8.5,2.5 8.5,9 1.5,7.5" fill="#bfdcea" stroke="#8fb5c8" stroke-width="0.5"/><line x1="0.8" y1="0.6" x2="9.2" y2="9.4" stroke="#444" stroke-width="1"/></svg></div>
<div class="ttext" style="left:192.3px;top:331.32px">Plan6</div>
<div class="arr" style="left:173px;top:341.47px">▸</div>
<div class="ticon" style="left:180.8px;top:341.95px"><svg viewBox="0 0 10 10" width="9" height="9"><path d="M3,1 H7 L8.5,6.5 Q9,9 5,9 Q1,9 1.5,6.5 Z" fill="#3f7fc0" stroke="#1f4b7a" stroke-width="0.7"/><ellipse cx="5" cy="1.8" rx="2" ry="0.9" fill="#b8d4ec"/></svg></div>
<div class="ttext" style="left:192.3px;top:341.47px">Lissage2</div>
<div class="ticon" style="left:180.8px;top:352.10px"><svg viewBox="0 0 10 10" width="9" height="9"><polygon points="1.5,1 8.5,2.5 8.5,9 1.5,7.5" fill="#bfdcea" stroke="#8fb5c8" stroke-width="0.5"/><line x1="0.8" y1="0.6" x2="9.2" y2="9.4" stroke="#444" stroke-width="1"/></svg></div>
<div class="ttext" style="left:192.3px;top:351.63px">Plan7</div>
<div class="ticon" style="left:180.8px;top:362.26px"><svg viewBox="0 0 10 10" width="9" height="9"><polygon points="1.5,1 8.5,2.5 8.5,9 1.5,7.5" fill="#bfdcea" stroke="#8fb5c8" stroke-width="0.5"/><line x1="0.8" y1="0.6" x2="9.2" y2="9.4" stroke="#444" stroke-width="1"/></svg></div>
<div class="ttext" style="left:192.3px;top:361.78px">Plan8</div>
<div class="arr" style="left:173px;top:371.94px">▸</div>
<div class="ticon" style="left:180.8px;top:372.41px"><svg viewBox="0 0 10 10" width="9" height="9"><path d="M1,4 L4,2 L9,2.5 L9,6.5 L6,8.5 L1,8 Z" fill="#f2f2f2" stroke="#555" stroke-width="0.8"/><path d="M1,4 L6,4.6 L9,2.5 M6,4.6 V8.5" stroke="#555" stroke-width="0.6" fill="none"/></svg></div>
<div class="ttext" style="left:192.3px;top:371.94px">Frontière2</div>
<div class="arr" style="left:173px;top:382.09px">▸</div>
<div class="ticon" style="left:180.8px;top:382.57px"><svg viewBox="0 0 10 10" width="9" height="9"><path d="M5,1 A4,4 0 1 0 9,6 L5,5.5 Z" fill="#3f86c8" stroke="#23507e" stroke-width="0.7"/><path d="M5.8,0.8 A4,4 0 0 1 9.3,4.6 L5.8,4.3 Z" fill="#9cc4e6" stroke="#23507e" stroke-width="0.5"/></svg></div>
<div class="ttext" style="left:192.3px;top:382.09px">Révolution2</div>
<div class="ticon" style="left:180.8px;top:392.72px"><svg viewBox="0 0 10 10" width="9" height="9"><path d="M2,3 L5.5,1.5 L9,3 V7.5 L5.5,9 L2,7.5 Z" fill="#eef3f7" stroke="#4a5a68" stroke-width="0.8"/><path d="M2,3 Q5.5,5.5 9,3 M5.5,4.6 V9" stroke="#4e8ec8" stroke-width="0.8" fill="none"/></svg></div>
<div class="ttext" style="left:192.3px;top:392.25px">Congé1</div>
<div class="arr" style="left:173px;top:402.40px">▸</div>
<div class="ticon" style="left:180.8px;top:402.88px"><svg viewBox="0 0 10 10" width="9" height="9"><rect x="1.5" y="1.5" width="7.5" height="7.5" fill="#dce6ee" stroke="#5a6a78" stroke-width="0.8"/><rect x="4" y="3" width="3" height="4.5" fill="#4e8ec8" stroke="#26527e" stroke-width="0.5"/></svg></div>
<div class="ttext" style="left:192.3px;top:402.40px">Enlèv. mat.-Extru.3</div>
<div class="ticon" style="left:180.8px;top:413.03px"><svg viewBox="0 0 10 10" width="9" height="9"><polygon points="1.5,1 8.5,2.5 8.5,9 1.5,7.5" fill="#bfdcea" stroke="#8fb5c8" stroke-width="0.5"/><line x1="0.8" y1="0.6" x2="9.2" y2="9.4" stroke="#444" stroke-width="1"/></svg></div>
<div class="ttext" style="left:192.3px;top:412.56px">Plan9</div>
<div class="ticon" style="left:180.8px;top:423.19px"><svg viewBox="0 0 10 10" width="9" height="9"><polygon points="1.5,1 8.5,2.5 8.5,9 1.5,7.5" fill="#bfdcea" stroke="#8fb5c8" stroke-width="0.5"/><line x1="0.8" y1="0.6" x2="9.2" y2="9.4" stroke="#444" stroke-width="1"/></svg></div>
<div class="ttext" style="left:192.3px;top:422.71px">Plan10</div>
<div class="ticon" style="left:180.8px;top:433.34px"><svg viewBox="0 0 10 10" width="9" height="9"><path d="M1,1.5 L9,9 M1,1.5 V7" stroke="#667" stroke-width="0.9" fill="none"/></svg></div>
<div class="ttext" style="left:192.3px;top:432.87px">Esquisse22</div>
<div class="ticon" style="left:180.8px;top:443.50px"><svg viewBox="0 0 10 10" width="9" height="9"><polygon points="1.5,1 8.5,2.5 8.5,9 1.5,7.5" fill="#bfdcea" stroke="#8fb5c8" stroke-width="0.5"/><line x1="0.8" y1="0.6" x2="9.2" y2="9.4" stroke="#444" stroke-width="1"/></svg></div>
<div class="ttext" style="left:192.3px;top:443.02px">Plan11</div>
<div class="arr" style="left:173px;top:453.18px">▸</div>
<div class="ticon" style="left:180.8px;top:453.65px"><svg viewBox="0 0 10 10" width="9" height="9"><path d="M1,4 L4,2 L9,2.5 L9,6.5 L6,8.5 L1,8 Z" fill="#f2f2f2" stroke="#555" stroke-width="0.8"/><path d="M1,4 L6,4.6 L9,2.5 M6,4.6 V8.5" stroke="#555" stroke-width="0.6" fill="none"/></svg></div>
<div class="ttext" style="left:192.3px;top:453.18px">Frontière3</div>
<div class="ticon" style="left:180.8px;top:463.81px"><svg viewBox="0 0 10 10" width="9" height="9"><polygon points="1.5,1 8.5,2.5 8.5,9 1.5,7.5" fill="#bfdcea" stroke="#8fb5c8" stroke-width="0.5"/><line x1="0.8" y1="0.6" x2="9.2" y2="9.4" stroke="#444" stroke-width="1"/></svg></div>
<div class="ttext" style="left:192.3px;top:463.33px">Plan13</div>
<div class="arr" style="left:173px;top:473.49px">▸</div>
<div class="ticon" style="left:180.8px;top:473.96px"><svg viewBox="0 0 10 10" width="9" height="9"><rect x="1.5" y="1.5" width="7.5" height="7.5" fill="#dce6ee" stroke="#5a6a78" stroke-width="0.8"/><rect x="4" y="3" width="3" height="4.5" fill="#4e8ec8" stroke="#26527e" stroke-width="0.5"/></svg></div>
<div class="ttext" style="left:192.3px;top:473.49px">Enlèv. mat.-Extru.4</div>
<!-- scrollbars -->
<div style="left:266.2px;top:136.6px;width:6.4px;height:344px;background:#f1f1f1"></div>
<div style="left:266.5px;top:157.3px;width:5.5px;height:47.7px;background:linear-gradient(90deg,#e4e4e4,#f3f3f3);border:0.6px solid #c6c6c6;box-sizing:border-box"></div>
<div style="left:267.8px;top:179.6px;width:3px;height:0.5px;background:#888;box-shadow:0 1.1px 0 #888, 0 2.2px 0 #888"></div>
<div style="left:266.5px;top:138.3px;width:5.6px;height:7px;background:#f8f8f8;border:0.5px solid #ccc;box-sizing:border-box"></div>
<div style="left:268.2px;top:141px;width:0;height:0;border-left:1.2px solid transparent;border-right:1.2px solid transparent;border-bottom:1.5px solid #444"></div>
<div style="left:266.8px;top:472.6px;width:5px;height:6.4px;background:#f4f4f4;border:0.5px solid #bbb;box-sizing:border-box"></div>
<div style="left:268.1px;top:475px;width:0;height:0;border-top:1.1px solid transparent;border-bottom:1.1px solid transparent;border-right:1.4px solid #555"></div>
<div style="left:163px;top:481px;width:110px;height:4px;background:#f3f3f3"></div>
<div style="left:167.4px;top:481.6px;width:48px;height:3.2px;background:#e2e2e2;border:0.5px solid #bbb;box-sizing:border-box"></div>
<div style="left:190px;top:482.4px;width:0.5px;height:1.8px;background:#999;box-shadow:1px 0 0 #999, 2px 0 0 #999"></div>
<div style="left:163.6px;top:482.2px;width:0;height:0;border-top:1px solid transparent;border-bottom:1px solid transparent;border-right:1.3px solid #555"></div>
<div style="left:260.8px;top:482.2px;width:0;height:0;border-top:1px solid transparent;border-bottom:1px solid transparent;border-left:1.3px solid #555"></div>
<!-- splitter -->
<div style="left:272.3px;top:103.2px;width:0.7px;height:381.8px;background:#e8e8ee"></div>
<div style="left:272.5px;top:282.4px;width:4.3px;height:17.4px;background:#f6f6f8;border-radius:0 1px 1px 0"></div>
<div style="left:273.9px;top:290.2px;width:1.5px;height:1.7px;background:#aaa;border-radius:50%"></div>
<!-- eye tabs on strip -->
<div style="left:280px;top:125px;width:15.6px;height:11px;background:rgba(206,214,234,0.62)"></div>
<div style="left:295.6px;top:125px;width:19.2px;height:11px;background:rgba(160,200,236,0.8);border:0.6px solid rgba(140,184,224,0.9);box-sizing:border-box"></div>
<svg viewBox="0 0 35 11" width="35" height="11" style="left:280px;top:125px">
<path d="M6.4,4.2 Q6.4,2.6 8.6,2.8 L13.4,4.6 Q14.6,6.4 13,8.4 Q9.4,9.4 7.4,7.4 Z" fill="#eef0f4" stroke="#556" stroke-width="0.7"/><rect x="10" y="3.2" width="3.6" height="2.8" fill="#2e78b0"/>
<path d="M15.6,1.8 L17.8,5.5 L15.6,9.2" fill="#ced6ea" fill-opacity="0.62" stroke="none"/>
<path d="M21,4.2 Q21,2.6 23.2,2.8 L27.6,4.6 Q28.8,6.4 27.2,8.4 Q23.8,9.4 22,7.4 Z" fill="#e6e8ec" stroke="#667" stroke-width="0.7"/><circle cx="25.4" cy="6.2" r="1.5" fill="#b4b8c0" stroke="#778" stroke-width="0.4"/>
</svg>
<!-- heads-up small toolbar -->
<svg viewBox="0 0 90 13" width="90" height="13" style="left:306px;top:110.6px">
<path d="M1,6.6 H3.4 M3.4,5 L5.6,6.6 L3.4,8.2 Z" fill="none" stroke="#778" stroke-width="0.6"/>
<g fill="#f7fafd" stroke="#d5e3ee" stroke-width="0.5"><rect x="8.4" y="0.8" width="11.2" height="11.2"/><rect x="19.9" y="0.8" width="11.2" height="11.2"/><rect x="31.4" y="0.8" width="11.2" height="11.2"/><rect x="42.9" y="0.8" width="11.2" height="11.2"/><rect x="54.4" y="0.8" width="11.2" height="11.2"/><rect x="65.9" y="0.8" width="11.2" height="11.2"/><rect x="77.4" y="0.8" width="11.2" height="11.2"/></g>
<g fill="none" stroke="#5f9acb" stroke-width="0.65">
<circle cx="14" cy="6.6" r="3.9"/><circle cx="14" cy="6.6" r="2"/>
<circle cx="37" cy="6.6" r="3.9"/><circle cx="37" cy="6.6" r="2"/>
<path d="M21.6,9.8 L27,3.4 L29.4,9.4 M27,3.4 L28.2,2"/>
<path d="M44.6,9.8 L50,3.4 L52.4,9.4 M50,3.4 L51.2,2"/>
<path d="M56.6,3.4 V9.8 M63.4,3.4 V9.8 M56.6,6.6 H63.4"/>
<path d="M68.1,3.4 V9.8 M74.9,3.4 V9.8 M68.1,6.6 H74.9"/>
<path d="M79.6,3.2 L86.4,10 M81.4,2.4 L87.4,8.4"/>
</g>
<path d="M74.2,3.4 V9.8" stroke="#666" stroke-width="1.2"/>
</svg>
<div style="position:absolute;left:578.0px;top:96.4px;width:9px;height:9px"><svg viewBox="0 0 9 9" width="9" height="9"><circle cx="5.3" cy="3.5" r="2.4" fill="#e8f0f6" stroke="#3a78a8" stroke-width="1"/><path d="M3.4,5.4 L1,8" stroke="#3a78a8" stroke-width="1.4"/></svg></div>
<div style="position:absolute;left:590.5px;top:96.4px;width:9px;height:9px"><svg viewBox="0 0 9 9" width="9" height="9"><circle cx="5.3" cy="3.5" r="2.4" fill="#e8f0f6" stroke="#3a78a8" stroke-width="1"/><path d="M3.4,5.4 L1,8" stroke="#3a78a8" stroke-width="1.4"/><rect x="3.4" y="1" width="4.6" height="4.6" fill="none" stroke="#777" stroke-width="0.5" stroke-dasharray="1 0.6"/></svg></div>
<div style="position:absolute;left:602.3px;top:96.4px;width:9px;height:9px"><svg viewBox="0 0 9 9" width="9" height="9"><path d="M1,7 L7.5,1.5 L8.2,3 L3,7.8 Z" fill="#ccc" stroke="#777" stroke-width="0.6"/><path d="M2,8 H7" stroke="#3a78a8" stroke-width="1.1"/></svg></div>
<div style="position:absolute;left:614.3px;top:96.4px;width:9px;height:9px"><svg viewBox="0 0 9 9" width="9" height="9"><path d="M1,2.5 L4.5,1.5 L8,2.5 V7.5 L4.5,6.6 L1,7.5 Z" fill="#4f8fc0" stroke="#2a5a84" stroke-width="0.6"/><path d="M4.5,1.5 V6.6" stroke="#dbe9f5" stroke-width="0.6"/></svg></div>
<div style="position:absolute;left:626.2px;top:96.4px;width:9px;height:9px"><svg viewBox="0 0 9 9" width="9" height="9"><circle cx="4" cy="3.6" r="2.6" fill="#ddd" stroke="#666" stroke-width="0.8"/><path d="M2,8.5 L7.5,1 M5,5 L8,8.5" stroke="#3a78a8" stroke-width="0.9"/></svg></div>
<div style="position:absolute;left:638.5px;top:96.4px;width:9px;height:9px"><svg viewBox="0 0 9 9" width="9" height="9"><rect x="1" y="2.6" width="5.4" height="5.8" fill="#5a9acc" stroke="#2a5a84" stroke-width="0.6"/><rect x="3.6" y="0.8" width="4.6" height="4.4" fill="#eef4f8" stroke="#555" stroke-width="0.6"/></svg></div>
<div class="dd" style="left:651.2px;top:100.2px;opacity:.7"></div>
<div style="position:absolute;left:657.4px;top:96.4px;width:9px;height:9px"><svg viewBox="0 0 9 9" width="9" height="9"><path d="M1.5,2 L4.5,1 L7.5,2 V7.4 L4.5,8.4 L1.5,7.4 Z" fill="#5a9acc" stroke="#2a5a84" stroke-width="0.6"/><path d="M4.5,1 V8.4" stroke="#dbe9f5" stroke-width="0.7"/></svg></div>
<div class="dd" style="left:669.6px;top:100.2px;opacity:.7"></div>
<div style="position:absolute;left:675.5px;top:96.4px;width:9px;height:9px"><svg viewBox="0 0 9 9" width="9" height="9"><path d="M0.8,4.5 Q4.5,0.8 8.2,4.5 Q4.5,7.6 0.8,4.5 Z" fill="#e4e4e4" stroke="#777" stroke-width="0.7"/><circle cx="4.5" cy="4.3" r="1.5" fill="#555"/></svg></div>
<div class="dd" style="left:688.2px;top:100.2px;opacity:.7"></div>
<div style="position:absolute;left:693.8px;top:96.4px;width:9px;height:9px"><svg viewBox="0 0 9 9" width="9" height="9"><circle cx="4.5" cy="4" r="3.6" fill="#3a9a48"/><path d="M4.5,4 L4.5,0.4 A3.6,3.6 0 0 1 8.1,4 Z" fill="#d83a2a"/><path d="M4.5,4 L0.9,4 A3.6,3.6 0 0 1 4.5,0.4 Z" fill="#3a78c8"/><path d="M3,6 L6,6 L4.5,8.8 Z" fill="#3a9a48"/></svg></div>
<div style="position:absolute;left:705.5px;top:96.4px;width:9px;height:9px"><svg viewBox="0 0 9 9" width="9" height="9"><circle cx="4.5" cy="3.6" r="3.2" fill="#3a9a48"/><path d="M4.5,3.6 L4.5,0.4 A3.2,3.2 0 0 1 7.7,3.6 Z" fill="#d83a2a"/><path d="M4.5,3.6 L1.3,3.6 A3.2,3.2 0 0 1 4.5,0.4 Z" fill="#3a78c8"/><path d="M0.8,8.6 L2.5,5.6 H6.5 L8.2,8.6 Z" fill="#444"/></svg></div>
<div class="dd" style="left:718.9px;top:100.2px;opacity:.7"></div>
<div style="position:absolute;left:724.3px;top:96.4px;width:9px;height:9px"><svg viewBox="0 0 9 9" width="9" height="9"><rect x="1" y="1.2" width="7" height="5" fill="#e8e8e8" stroke="#555" stroke-width="0.8"/><path d="M4.5,6.2 V8 M2.8,8.2 H6.2" stroke="#555" stroke-width="0.8"/></svg></div>
<div class="dd" style="left:737.2px;top:100.2px;opacity:.7"></div>
<!-- triad -->
<svg viewBox="0 0 30 32" width="30" height="32" style="left:274px;top:444px">
<path d="M18.2,19 V5.2" stroke="#1a9a2a" stroke-width="1.5"/><path d="M16.6,6.6 L18.2,2.6 L19.8,6.6 Z" fill="#1a9a2a"/>
<path d="M18.2,19 L5.8,20.4" stroke="#2222d8" stroke-width="1.6"/><path d="M7,18.6 L2.6,20.7 L7.2,22.2 Z" fill="#2222d8"/>
<path d="M18.2,19 L20.4,24.4" stroke="#cc2222" stroke-width="1.5"/><circle cx="20.6" cy="24.6" r="1.4" fill="#cc2222"/>
<text x="17" y="3.6" font-family="Liberation Sans, sans-serif" font-size="3.6" font-weight="bold" fill="#1a9a2a">Y</text>
<text x="0.2" y="22.4" font-family="Liberation Sans, sans-serif" font-size="3.8" font-weight="bold" fill="#2222d8">Z</text>
<text x="20" y="29.6" font-family="Liberation Sans, sans-serif" font-size="3.6" font-weight="bold" fill="#cc2222">X</text>
</svg>
<div style="left:278.6px;top:481.2px;width:28px;height:3.8px;overflow:hidden;font-size:6.4px;line-height:7px;font-weight:bold;color:#222;white-space:nowrap;letter-spacing:0.3px">Central</div>
<!-- page: caption & thumbs -->
<div style="left:0;top:0;width:962px;height:1.9px;background:#fff"></div>
<div style="left:0;top:625px;width:962px;height:4px;background:#fff"></div>
<div class="cap"></div>
<div class="captxt">-)雪铁龙客车模型树</div>
<div class="th" style="left:-0.6px;width:91.4px;border-color:#555"></div>
<div style="left:1.4px;top:565.0px;width:87.8px;height:56.3px;overflow:hidden;background:#fff">
<svg viewBox="0 0 87.8 56.3" width="87.8" height="56.3" style="left:0;top:0">
<rect x="0" y="0" width="87.8" height="6.98" fill="#f4f4f4"/>
<rect x="9.83" y="1.89" width="78" height="0.25" fill="#c4c4c4"/>
<rect x="26.21" y="6.94" width="62" height="0.25" fill="#c0c0c0"/>
<rect x="0.13" y="0.25" width="8.44" height="1.76" fill="#fff"/>
<rect x="0.50" y="0.88" width="7.56" height="0.7" fill="#e2685f"/>
<rect x="11.84" y="0.76" width="18.40" height="0.9" fill="#7a8ea6" opacity="0.55"/>
<rect x="58.34" y="0.88" width="6.30" height="0.5" fill="#999" opacity="0.6"/>
<rect x="38.23" y="2.29" width="3.58" height="4.54" fill="#d2d2d2"/>
<rect x="0.41" y="2.71" width="1.2" height="1.4" fill="#5f7f9c" opacity="0.35"/><rect x="-0.09" y="4.16" width="2.2" height="1.3" fill="#9a9a9a" opacity="0.28"/><rect x="3.12" y="2.71" width="1.2" height="1.4" fill="#5f7f9c" opacity="0.85"/><rect x="2.62" y="4.16" width="2.2" height="1.3" fill="#9a9a9a" opacity="0.68"/><rect x="5.47" y="2.71" width="1.2" height="1.4" fill="#5f7f9c" opacity="0.85"/><rect x="4.97" y="4.16" width="2.2" height="1.3" fill="#9a9a9a" opacity="0.68"/><rect x="7.72" y="2.71" width="1.2" height="1.4" fill="#5f7f9c" opacity="0.35"/><rect x="7.22" y="4.16" width="2.2" height="1.3" fill="#9a9a9a" opacity="0.28"/><rect x="10.87" y="2.71" width="1.2" height="1.4" fill="#5f7f9c" opacity="0.85"/><rect x="10.37" y="4.16" width="2.2" height="1.3" fill="#9a9a9a" opacity="0.68"/><rect x="13.86" y="2.71" width="1.2" height="1.4" fill="#5f7f9c" opacity="0.85"/><rect x="13.36" y="4.16" width="2.2" height="1.3" fill="#9a9a9a" opacity="0.68"/><rect x="16.54" y="2.71" width="1.2" height="1.4" fill="#5f7f9c" opacity="0.85"/><rect x="16.04" y="4.16" width="2.2" height="1.3" fill="#9a9a9a" opacity="0.68"/><rect x="19.51" y="2.71" width="1.2" height="1.4" fill="#5f7f9c" opacity="0.85"/><rect x="19.01" y="4.16" width="2.2" height="1.3" fill="#9a9a9a" opacity="0.68"/><rect x="22.24" y="2.71" width="1.2" height="1.4" fill="#5f7f9c" opacity="0.85"/><rect x="21.74" y="4.16" width="2.2" height="1.3" fill="#9a9a9a" opacity="0.68"/><rect x="24.89" y="2.71" width="1.2" height="1.4" fill="#5f7f9c" opacity="0.85"/><rect x="24.39" y="4.16" width="2.2" height="1.3" fill="#9a9a9a" opacity="0.68"/><rect x="27.72" y="2.71" width="1.2" height="1.4" fill="#5f7f9c" opacity="0.85"/><rect x="27.22" y="4.16" width="2.2" height="1.3" fill="#9a9a9a" opacity="0.68"/><rect x="30.58" y="2.71" width="1.2" height="1.4" fill="#5f7f9c" opacity="0.85"/><rect x="30.08" y="4.16" width="2.2" height="1.3" fill="#9a9a9a" opacity="0.68"/><rect x="33.46" y="2.71" width="1.2" height="1.4" fill="#5f7f9c" opacity="0.85"/><rect x="32.96" y="4.16" width="2.2" height="1.3" fill="#9a9a9a" opacity="0.68"/><rect x="36.13" y="2.71" width="1.2" height="1.4" fill="#5f7f9c" opacity="0.35"/><rect x="35.63" y="4.16" width="2.2" height="1.3" fill="#9a9a9a" opacity="0.28"/><rect x="39.43" y="2.71" width="1.2" height="1.4" fill="#5f7f9c" opacity="0.85"/><rect x="38.93" y="4.16" width="2.2" height="1.3" fill="#9a9a9a" opacity="0.68"/><rect x="43.06" y="2.71" width="1.2" height="1.4" fill="#5f7f9c" opacity="0.85"/><rect x="42.56" y="4.16" width="2.2" height="1.3" fill="#9a9a9a" opacity="0.68"/><rect x="46.42" y="2.71" width="1.2" height="1.4" fill="#5f7f9c" opacity="0.85"/><rect x="45.92" y="4.16" width="2.2" height="1.3" fill="#9a9a9a" opacity="0.68"/>
<rect x="2.82" y="7.01" width="23.31" height="1.21" fill="#d0d0d0"/>
<rect x="1.81" y="9.63" width="9.45" height="1.41" fill="#cfcfcf"/>
<rect x="52.54" y="7.56" width="20.16" height="0.8" fill="#7aa2c4" opacity="0.6"/>
<rect x="19.03" y="9.32" width="10.08" height="1.2" fill="#b8d2e6" opacity="0.8"/>
<rect x="0.81" y="12.60" width="12.20" height="1.29" fill="#a9cfea"/><rect x="3.65" y="12.99" width="8.82" height="0.6" fill="#5f7f98" opacity="0.8"/><rect x="2.27" y="14.17" width="1.1" height="0.8" fill="#8a8f96" opacity="0.85"/><rect x="3.69" y="14.27" width="5.48" height="0.6" fill="#8a8d92" opacity="0.75"/><rect x="2.27" y="15.45" width="1.1" height="0.8" fill="#8a8f96" opacity="0.85"/><rect x="3.69" y="15.55" width="3.65" height="0.6" fill="#8a8d92" opacity="0.75"/><rect x="2.27" y="16.73" width="1.1" height="0.8" fill="#8a8f96" opacity="0.85"/><rect x="3.69" y="16.83" width="2.92" height="0.6" fill="#8a8d92" opacity="0.75"/><rect x="2.27" y="18.00" width="1.1" height="0.8" fill="#8a8f96" opacity="0.85"/><rect x="3.69" y="18.10" width="4.02" height="0.6" fill="#8a8d92" opacity="0.75"/><rect x="2.27" y="19.28" width="1.1" height="0.8" fill="#8a8f96" opacity="0.85"/><rect x="3.69" y="19.38" width="2.92" height="0.6" fill="#8a8d92" opacity="0.75"/><rect x="2.27" y="20.56" width="1.1" height="0.8" fill="#7fa8c8" opacity="0.85"/><rect x="3.69" y="20.66" width="4.38" height="0.6" fill="#8a8d92" opacity="0.75"/><rect x="2.27" y="21.84" width="1.1" height="0.8" fill="#7fa8c8" opacity="0.85"/><rect x="3.69" y="21.94" width="5.12" height="0.6" fill="#8a8d92" opacity="0.75"/><rect x="2.27" y="23.12" width="1.1" height="0.8" fill="#7fa8c8" opacity="0.85"/><rect x="3.69" y="23.22" width="5.12" height="0.6" fill="#8a8d92" opacity="0.75"/><rect x="2.27" y="24.40" width="1.1" height="0.8" fill="#8a8f96" opacity="0.85"/><rect x="3.69" y="24.50" width="2.56" height="0.6" fill="#8a8d92" opacity="0.75"/><rect x="2.27" y="25.68" width="1.1" height="0.8" fill="#7fa8c8" opacity="0.85"/><rect x="3.69" y="25.78" width="4.75" height="0.6" fill="#8a8d92" opacity="0.75"/><rect x="2.27" y="26.96" width="1.1" height="0.8" fill="#7fa8c8" opacity="0.85"/><rect x="3.69" y="27.06" width="1.83" height="0.6" fill="#8a8d92" opacity="0.75"/><rect x="2.27" y="28.24" width="1.1" height="0.8" fill="#7fa8c8" opacity="0.85"/><rect x="3.69" y="28.34" width="4.02" height="0.6" fill="#8a8d92" opacity="0.75"/><rect x="2.27" y="29.52" width="1.1" height="0.8" fill="#7fa8c8" opacity="0.85"/><rect x="3.69" y="29.62" width="6.94" height="0.6" fill="#8a8d92" opacity="0.75"/><rect x="2.27" y="30.80" width="1.1" height="0.8" fill="#7fa8c8" opacity="0.85"/><rect x="3.69" y="30.90" width="6.94" height="0.6" fill="#8a8d92" opacity="0.75"/><rect x="2.27" y="32.08" width="1.1" height="0.8" fill="#7fa8c8" opacity="0.85"/><rect x="3.69" y="32.18" width="1.83" height="0.6" fill="#8a8d92" opacity="0.75"/><rect x="2.27" y="33.36" width="1.1" height="0.8" fill="#7fa8c8" opacity="0.85"/><rect x="3.69" y="33.46" width="1.83" height="0.6" fill="#8a8d92" opacity="0.75"/><rect x="2.27" y="34.64" width="1.1" height="0.8" fill="#7fa8c8" opacity="0.85"/><rect x="3.69" y="34.74" width="2.92" height="0.6" fill="#8a8d92" opacity="0.75"/><rect x="2.27" y="35.92" width="1.1" height="0.8" fill="#7fa8c8" opacity="0.85"/><rect x="3.69" y="36.02" width="1.83" height="0.6" fill="#8a8d92" opacity="0.75"/><rect x="2.27" y="37.20" width="1.1" height="0.8" fill="#7fa8c8" opacity="0.85"/><rect x="3.69" y="37.30" width="1.83" height="0.6" fill="#8a8d92" opacity="0.75"/><rect x="2.27" y="38.48" width="1.1" height="0.8" fill="#7fa8c8" opacity="0.85"/><rect x="3.69" y="38.58" width="2.92" height="0.6" fill="#8a8d92" opacity="0.75"/><rect x="2.27" y="39.76" width="1.1" height="0.8" fill="#7fa8c8" opacity="0.85"/><rect x="3.69" y="39.86" width="1.83" height="0.6" fill="#8a8d92" opacity="0.75"/><rect x="2.27" y="41.04" width="1.1" height="0.8" fill="#7fa8c8" opacity="0.85"/><rect x="3.69" y="41.14" width="1.83" height="0.6" fill="#8a8d92" opacity="0.75"/><rect x="2.27" y="42.32" width="1.1" height="0.8" fill="#8a8f96" opacity="0.85"/><rect x="3.69" y="42.42" width="3.65" height="0.6" fill="#8a8d92" opacity="0.75"/><rect x="2.27" y="43.60" width="1.1" height="0.8" fill="#7fa8c8" opacity="0.85"/><rect x="3.69" y="43.70" width="4.02" height="0.6" fill="#8a8d92" opacity="0.75"/><rect x="2.27" y="44.87" width="1.1" height="0.8" fill="#8a8f96" opacity="0.85"/><rect x="3.69" y="44.97" width="2.19" height="0.6" fill="#8a8d92" opacity="0.75"/><rect x="2.27" y="46.15" width="1.1" height="0.8" fill="#7fa8c8" opacity="0.85"/><rect x="3.69" y="46.25" width="6.94" height="0.6" fill="#8a8d92" opacity="0.75"/><rect x="2.27" y="47.43" width="1.1" height="0.8" fill="#7fa8c8" opacity="0.85"/><rect x="3.69" y="47.53" width="1.83" height="0.6" fill="#8a8d92" opacity="0.75"/><rect x="2.27" y="48.71" width="1.1" height="0.8" fill="#7fa8c8" opacity="0.85"/><rect x="3.69" y="48.81" width="2.19" height="0.6" fill="#8a8d92" opacity="0.75"/><rect x="2.27" y="49.99" width="1.1" height="0.8" fill="#8a8f96" opacity="0.85"/><rect x="3.69" y="50.09" width="3.65" height="0.6" fill="#8a8d92" opacity="0.75"/><rect x="2.27" y="51.27" width="1.1" height="0.8" fill="#7fa8c8" opacity="0.85"/><rect x="3.69" y="51.37" width="2.19" height="0.6" fill="#8a8d92" opacity="0.75"/><rect x="2.27" y="52.55" width="1.1" height="0.8" fill="#8a8f96" opacity="0.85"/><rect x="3.69" y="52.65" width="3.65" height="0.6" fill="#8a8d92" opacity="0.75"/><rect x="2.27" y="53.83" width="1.1" height="0.8" fill="#7fa8c8" opacity="0.85"/><rect x="3.69" y="53.93" width="2.19" height="0.6" fill="#8a8d92" opacity="0.75"/><rect x="2.27" y="55.11" width="1.1" height="0.8" fill="#7fa8c8" opacity="0.85"/><rect x="3.69" y="55.21" width="6.94" height="0.6" fill="#8a8d92" opacity="0.75"/>
<rect x="13.03" y="14.11" width="0.7" height="5.92" fill="#d0d0d0"/>
</svg>
<svg viewBox="273 94 587 391" width="73.96" height="49.27" style="left:13.86px;top:7.06px">
<defs>
<linearGradient id="tUp" gradientUnits="userSpaceOnUse" x1="400" y1="287" x2="391.2" y2="197"><stop offset="0" stop-color="#a6a6a6"/><stop offset="0.16" stop-color="#d2d2d2"/><stop offset="0.4" stop-color="#ececec"/><stop offset="1" stop-color="#ffffff"/></linearGradient>
<linearGradient id="tDown" gradientUnits="userSpaceOnUse" x1="400" y1="372.5" x2="406.8" y2="440.5"><stop offset="0" stop-color="#9c9c9c"/><stop offset="0.22" stop-color="#cfcfcf"/><stop offset="0.5" stop-color="#ececec"/><stop offset="1" stop-color="#ffffff"/></linearGradient>
<linearGradient id="tFade" gradientUnits="userSpaceOnUse" x1="300" y1="0" x2="860" y2="0"><stop offset="0" stop-color="#fff" stop-opacity="0"/><stop offset="1" stop-color="#fff" stop-opacity="0.5"/></linearGradient>
</defs>
<rect x="273" y="94" width="587" height="391" fill="#fff"/>
<polygon points="273,190 860,132 860,306 273,300" fill="url(#tUp)"/>
<polygon points="273,120 860,120 860,306 273,300" fill="url(#tFade)"/>
<polygon points="273,380 860,320 860,412 273,470" fill="url(#tDown)"/>
<polygon points="273,299.2 834,244.5 860,304.6 860,327 273,386.4" fill="#414141"/>
<g fill="#8c8c8c"><polygon points="306,337 356.4,332.2 356.4,336.2 306,341"/><polygon points="400.3,327.6 461.6,321.8 461.6,325.8 400.3,331.8"/><polygon points="505.8,316.8 604,307.9 604,312 505.8,321"/><polygon points="647.9,302.2 708.9,297 708.9,301.1 647.9,306.4"/><polygon points="752.7,292.2 850.3,283.2 850.3,287.4 752.7,296.5"/></g>
<rect x="443" y="247" width="157" height="28" fill="#b4b4b4" opacity="0.5"/>
<rect x="486" y="206" width="5" height="38" fill="#555"/><rect x="732" y="182" width="5" height="26" fill="#555"/>
<path d="M665,215 L740,207 Q749,211 751,236 L751,281 L676,289 L634,287 L618,270 L624,250 L641,224 Q650,216 665,215 Z" fill="#2672c6"/>
<path d="M665,215 L740,207 Q749,211 751,236 L675,243 Z" fill="#123a6a"/>
<path d="M675,262 L751,255.6 L750.6,281.6 L675.4,288.6 Z" fill="#14406f"/>
<circle cx="660" cy="291" r="9" fill="#6a2a1c"/><circle cx="734" cy="283.5" r="8.4" fill="#6a2a1c"/>
<rect x="273.3" y="103.2" width="32.8" height="382" fill="#7b7b9e" opacity="0.745"/>
</svg>
</div>
<div class="th" style="left:99.2px;width:108.8px"></div>
<svg viewBox="101 565 105 56" width="105" height="56" style="position:absolute;left:101px;top:565px">
<rect x="101" y="565" width="105" height="56" fill="#fff"/>
<!-- lower red body -->
<polygon points="142.5,601.5 193.8,601.5 194.6,612.8 142.5,612.8" fill="#b8330c"/>
<polygon points="124,603 143,601 143,612.8 121,611" fill="#d9400c"/>
<!-- olive band -->
<polygon points="143,591.5 193.6,591.5 193.9,601.8 143,601.8" fill="#9c9556"/>
<!-- cab -->
<polygon points="127.5,580 143,578 143,602 122.5,603.5" fill="#a09852"/>
<polygon points="128.5,583 140.2,582.5 140.2,592 126.6,592.3" fill="#140c26"/>
<polygon points="123.5,596 143,595.2 143,598.5 123,599.5" fill="#c85a28"/>
<!-- cab roof -->
<path d="M127.5,580.5 Q128.5,575 137,574.3 L143.3,574.2 V578.6 Z" fill="#e5450c"/>
<!-- roof strip -->
<polygon points="143,574 194,574 194.2,578.8 143,578.8" fill="#b5330c"/>
<rect x="143" y="578.6" width="51" height="13" fill="#b8a850"/>
<!-- yellow panel -->
<rect x="145.6" y="579.2" width="46.2" height="12.4" fill="#f1ea66"/>
<path d="M148.5,589.5 Q170,575.6 190,589.5 Q170,581.8 148.5,589.5 Z" fill="#cf4220"/>
<rect x="162.8" y="587.2" width="12.8" height="2.7" fill="#4a4a20"/>
<!-- nose -->
<polygon points="114.5,591.6 123.5,590.6 126.5,592 121.5,611.2 111.2,609.8" fill="#dd420c"/>
<polygon points="116,594 121,594 118,607 114.5,606" fill="#7a200a"/>
<circle cx="117.2" cy="598.4" r="1.3" fill="#f6eeb0"/>
<polygon points="110.4,608.8 122,610.4 121.6,612 110.2,610.3" fill="#c0380c"/>
<!-- wheel arches + wheels -->
<path d="M126.5,612.8 Q127,603.6 133.7,603.6 Q140.3,603.6 141,612.8 Z" fill="#e0450e"/>
<path d="M175.6,612.8 Q176.2,604 183.2,604 Q190,604 190.6,612.8 Z" fill="#e0450e"/>
<path d="M128,612.8 Q128.6,605.6 133.7,605.6 Q139,605.6 139.6,612.8 Q134,614.8 128,612.8 Z" fill="#1c1c1c"/>
<path d="M177.3,612.8 Q177.8,606 183.2,606 Q188.4,606 189,612.8 Q183,614.8 177.3,612.8 Z" fill="#1c1c1c"/>
<rect x="167" y="601.8" width="0.7" height="11" fill="#8a260a"/><rect x="160" y="601.8" width="0.7" height="11" fill="#8a260a"/>
<polygon points="193.6,591.5 194.6,612.8 193.4,612.8 192.6,591.5" fill="#d9400c"/>
</svg>
<div class="th" style="left:216.2px;width:52.8px"></div>
<svg viewBox="218 565 49 56" width="49" height="56" style="left:218px;top:565px">
<defs><pattern id="st3" width="3.1" height="4" patternUnits="userSpaceOnUse" x="231"><rect width="3.1" height="4" fill="#7c260e"/><rect width="1" height="4" fill="#5a1a0a"/></pattern></defs>
<rect x="218" y="565" width="49" height="56" fill="#fff"/>
<path d="M232.4,568 Q243.2,566.8 254,568 Q255.8,569.4 255.6,574 L255.5,600 H230.8 L230.8,574 Q230.6,569.4 232.4,568 Z" fill="url(#st3)"/>
<path d="M231.2,570 V600 M255.2,570 V600" stroke="#c83e0e" stroke-width="0.8"/>
<path d="M231.4,585 V599 M255,585 V599" stroke="#e8500e" stroke-width="0.7"/>
<path d="M231.2,599.9 H255.2 Q256,605.6 254.2,609.5 H232.2 Q230.4,605.6 231.2,599.9 Z" fill="#f04c0c"/>
<path d="M232.4,609.3 H254 Q253.6,614 250.6,618 Q247.6,620.4 243.2,620.4 Q238.8,620.4 235.8,618 Q232.8,614 232.4,609.3 Z" fill="#5a1a0a"/>
<path d="M234.6,610.6 Q243.2,607.4 251.8,610.6 L250,612.8 Q243.2,610.6 236.4,612.8 Z" fill="#2c1008"/>
<path d="M233,610 Q232.6,615 236,618.4 M253.4,610 Q253.8,615 250.4,618.4" stroke="#d8440e" stroke-width="0.9" fill="none"/>
<circle cx="235.6" cy="616.1" r="0.9" fill="#f8efd2"/><circle cx="250.8" cy="616.1" r="0.9" fill="#f8efd2"/>
</svg>
<div class="th" style="left:277.2px;width:81.8px"></div>
<svg viewBox="279 565 78.4 56.2" width="78.4" height="56.2" style="left:279px;top:565px">
<defs><pattern id="st4" width="1.5" height="1.5" patternUnits="userSpaceOnUse" patternTransform="rotate(20)"><rect width="1.5" height="1.5" fill="#8a8244"/><rect width="1.5" height="0.6" fill="#6c642e"/></pattern>
<linearGradient id="t4g" x1="0" y1="0" x2="0" y2="1"><stop offset="0" stop-color="#e8450a"/><stop offset="0.35" stop-color="#d23c0a"/><stop offset="1" stop-color="#c4360c"/></linearGradient></defs>
<rect x="279" y="565" width="78.4" height="56.2" fill="#fff"/>
<!-- main body -->
<path d="M279,565 H341.1 Q346.8,571 346.4,580 Q346,596 341.4,620.6 Q316,619.6 295,611.6 L279,604.4 Z" fill="url(#t4g)"/>
<!-- roof highlight + lettering -->
<path d="M306,565 H341 Q345.6,569.6 346,576.4 L312,571.6 Z" fill="#ee4c0c"/>
<text x="318" y="570.6" font-family="Liberation Sans, sans-serif" font-size="2.6" font-weight="bold" fill="#f7b38e" transform="rotate(8 318 570)" textLength="16">CITROEN</text>
<!-- dark underside / bumper -->
<path d="M279,603.4 Q297,612.4 318,618.2 L341.4,620.4 L341,621.2 H316 Q294,615.6 279,607.4 Z" fill="#2a1a14"/>
<!-- left: olive / brown / bands -->
<polygon points="279,565 286,565 286,580 279,580.6" fill="#7c7634"/>
<polygon points="280.2,566.4 292.4,565 288,602.6 280.2,598.6" fill="#7a2a10"/>
<polygon points="279,580 281,580 281,604 279,603.6" fill="#6a2410"/>
<polygon points="290,581 304.6,583.2 302.2,603.4 289.4,598.4" fill="url(#st4)"/>
<polygon points="294.6,565 298,565 289.6,592.6 286.4,600 284.2,599 287,590.6" fill="#b4aa54"/>
<!-- wheel arch -->
<path d="M283.4,609.6 Q282.6,597.6 291,597 Q298.6,598.4 298.6,612.8 Z" fill="#e8500e"/>
<path d="M286.4,610.4 Q286,601 291.2,600.8 Q295.8,602 295.6,612.4 Z" fill="#b2340c"/>
<!-- cab pillar -->
<polygon points="298,565 307,565 306,590 303.8,604.6 300.6,604 304.6,583.2" fill="#cf3c0a"/>
<!-- side window -->
<polygon points="297.6,567.9 305.5,570.5 304.4,583.1 295,579.9" fill="#120e16"/>
<!-- windshield -->
<polygon points="307.6,573.1 325.4,575.7 324.3,586.2 306.5,582.6" fill="#15111c"/>
<polygon points="326.4,576.3 343.7,580.5 341.1,589.9 325.4,586.2" fill="#15111c"/>
<path d="M315,584.4 L321.6,580 M334.4,588.4 L340.6,583.6" stroke="#a8a8a8" stroke-width="0.55"/>
<!-- nose: yellow A shape -->
<polygon points="319.1,591.5 334.3,594.6 333.8,616.6 311.8,611.9" fill="#e2d868"/>
<polygon points="321.2,594.1 331.7,596.2 330.6,612.4 318.1,610.3" fill="#8a260a"/>
<polygon points="323,596 330,597.4 329.2,610.6 320.6,609.2" fill="#6e1c08"/>
<!-- left grill -->
<polygon points="305.5,590.4 313.9,592.5 311.8,607.2 304.4,604" fill="#8a2c0c"/>
<polygon points="307,593 312.2,594.2 310.6,604.4 306.2,602.6" fill="#6c5c26"/>
<circle cx="304.4" cy="609.8" r="0.9" fill="#f6eed6"/>
<circle cx="346.4" cy="582.4" r="1.3" fill="#4e4a26"/><circle cx="340.6" cy="603.4" r="1.3" fill="#5c5426"/>
<circle cx="337.4" cy="617" r="0.7" fill="#f6eed6"/>
<path d="M338.6,606 Q344.6,607.6 342.4,619" fill="none" stroke="#e8520e" stroke-width="2.2"/>
</svg>
</body></html>
